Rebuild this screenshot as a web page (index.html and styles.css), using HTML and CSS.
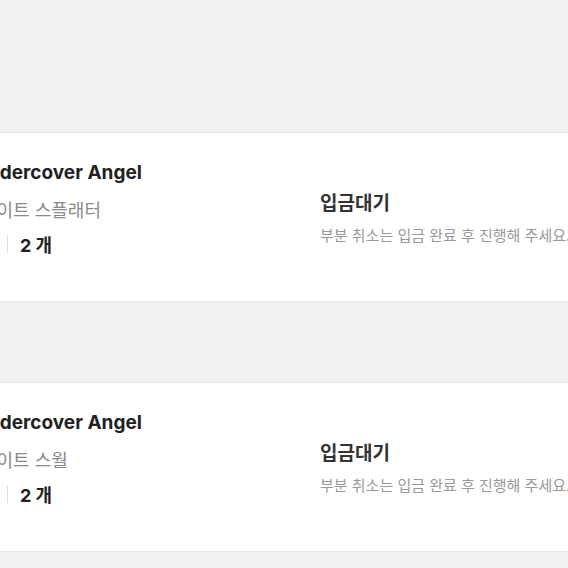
FILE: index.html
```html
<!DOCTYPE html>
<html lang="ko">
<head>
<meta charset="utf-8">
<link rel="stylesheet" href="styles.css">
</head>
<body>
<div class="page">
  <div class="spacer-top"></div>
  <div class="card">
    <div class="info">
      <div class="title">Undercover Angel</div>
      <div class="option">화이트 스플래터</div>
      <div class="qty"><span class="qty-label">수량</span><span class="divider"></span><span class="qty-num">2 개</span></div>
    </div>
    <div class="status">
      <div class="status-title">입금대기</div>
      <div class="status-desc">부분 취소는 입금 완료 후 진행해 주세요.</div>
    </div>
  </div>
  <div class="spacer-mid"></div>
  <div class="card">
    <div class="info">
      <div class="title">Undercover Angel</div>
      <div class="option">화이트 스월</div>
      <div class="qty"><span class="qty-label">수량</span><span class="divider"></span><span class="qty-num">2 개</span></div>
    </div>
    <div class="status">
      <div class="status-title">입금대기</div>
      <div class="status-desc">부분 취소는 입금 완료 후 진행해 주세요.</div>
    </div>
  </div>
  <div class="spacer-bottom"></div>
</div>
</body>
</html>
```
FILE: styles.css
```css
html, body {
  margin: 0;
  padding: 0;
  background: #f2f2f2;
  overflow: hidden;
}
body {
  font-family: "Inter", "Noto Sans CJK KR", sans-serif;
  color: #222;
}
.page {
  width: 568px;
  height: 568px;
  overflow: hidden;
  display: flex;
  flex-direction: column;
}
.spacer-top { height: 132px; flex: none; }
.spacer-mid { height: 81px; flex: none; }
.spacer-bottom { flex: 1; }
.card {
  flex: none;
  height: 168px;
  background: #fff;
  border-top: 1px solid #e3e3e3;
  box-shadow: 0 1px 2px rgba(0,0,0,0.06);
  display: flex;
  align-items: stretch;
  white-space: nowrap;
}
.info {
  width: 346px;
  margin-left: -26px;
  flex: none;
  padding-top: 28px;
  display: flex;
  flex-direction: column;
}
.title {
  font-size: 19px;
  line-height: 24px;
  font-weight: 700;
  color: #222;
}
.option {
  margin-top: 12px;
  margin-left: 6px;
  font-size: 18px;
  line-height: 24px;
  color: #8a8a8a;
  font-family: "Noto Sans CJK KR", sans-serif;
}
.qty {
  margin-top: 11px;
  display: flex;
  align-items: center;
  height: 24px;
  font-size: 18px;
  font-weight: 700;
  color: #222;
}
.qty-label {
  font-family: "Noto Sans CJK KR", sans-serif;
  font-weight: 400;
  font-size: 13px;
  color: #888;
  width: 24px;
  margin-right: 9px;
  overflow: hidden;
}
.divider {
  width: 1px;
  height: 18px;
  background: #dcdcdc;
  margin-right: 12px;
}
.status {
  flex: 1;
  display: flex;
  flex-direction: column;
  justify-content: center;
  gap: 10px;
  padding-bottom: 0;
}
.status-title {
  font-family: "Noto Sans CJK KR", sans-serif;
  font-size: 19px;
  line-height: 26px;
  font-weight: 700;
  color: #333;
}
.status-desc {
  font-family: "Noto Sans CJK KR", sans-serif;
  font-size: 15px;
  line-height: 20px;
  color: #999;
}
```
